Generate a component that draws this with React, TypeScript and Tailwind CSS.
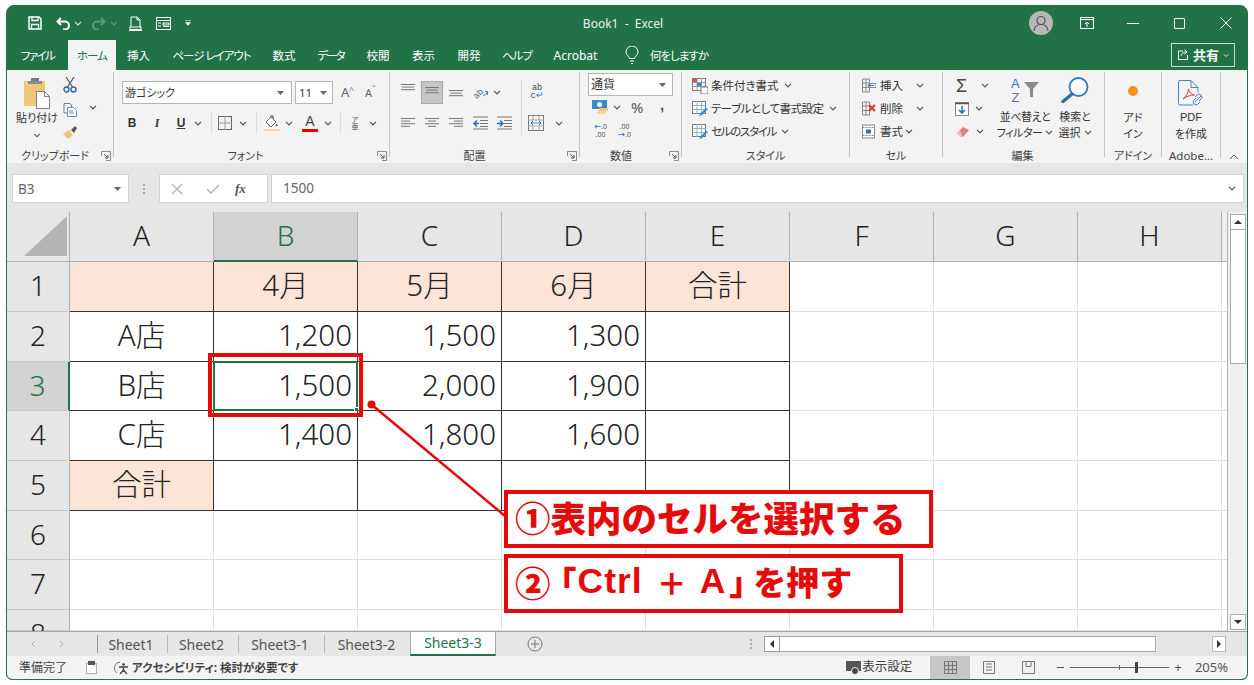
import React from "react";

const Chev = ({ className = "", color = "#555" }: { className?: string; color?: string }) => (
  <svg viewBox="0 0 8 5" className={"w-[8px] h-[5px] shrink-0 " + className}>
    <path d="M1 .8l3 3 3-3" fill="none" stroke={color} strokeWidth="1.2" />
  </svg>
);
const Drop = ({ className = "" }: { className?: string }) => (
  <svg viewBox="0 0 7 4" className={"w-[7px] h-[4px] shrink-0 " + className}>
    <path d="M0 0h7L3.5 4z" fill="#666" />
  </svg>
);
const Launcher = () => (
  <svg viewBox="0 0 10 10" className="w-[10px] h-[10px] shrink-0">
    <path d="M.5 5V.5H9.500V9.500H5" fill="none" stroke="#8a8a8a" />
    <path d="M3 3l4 4M7 4v3H4" fill="none" stroke="#555" />
  </svg>
);
const Sep = ({ className = "" }: { className?: string }) => <div className={"w-px shrink-0 bg-[#c4c4c4] " + className} />;
const MiniSep = ({ className = "" }: { className?: string }) => <div className={"w-px h-[22px] shrink-0 bg-[#dcdcdc] " + className} />;

const Lines = ({ rows, className = "" }: { rows: [number, number][]; className?: string }) => (
  <svg viewBox="0 0 14 12" className={"w-[14px] h-[12px] shrink-0 " + className}>
    {rows.map(([a, b], i) => (
      <path key={i} d={`M${a} ${i * 2.6 + 1.5}H${b}`} stroke="#777" strokeWidth="1" />
    ))}
  </svg>
);
const Indent = ({ flip, className = "" }: { flip?: boolean; className?: string }) => (
  <svg viewBox="0 0 15 14" className={"w-[15px] h-[14px] shrink-0 " + className}>
    <path d="M0 1H15M7 4.500H15M7 7.500H15M7 10.500H15M0 13H15" stroke="#777" />
    {flip ? <path d="M0 7.500H5M3 4.500l3 3-3 3" stroke="#1f6fb5" strokeWidth="1.400" fill="none" /> : <path d="M6 7.500H1M4 4.500l-3 3 3 3" stroke="#1f6fb5" strokeWidth="1.400" fill="none" />}
  </svg>
);

function Group({ w, label, launcher, children, labelClass = "" }: { w: string; label: string; launcher?: boolean; children: React.ReactNode; labelClass?: string }) {
  return (
    <div className={"flex flex-col h-full shrink-0 " + w}>
      <div className="flex-1 min-h-0">{children}</div>
      <div className="h-[15px] flex items-center text-[11px] text-[#444] leading-none">
        <span className={"flex-1 text-center whitespace-nowrap " + labelClass}>{label}</span>
        {launcher && <span className="mr-[2px]"><Launcher /></span>}
      </div>
    </div>
  );
}

const Tab = ({ w, children }: { w: string; children: React.ReactNode }) => (
  <div className={"h-full flex items-center justify-center pt-[1px] text-[11.500px] text-white whitespace-nowrap " + w}>{children}</div>
);

const peach = "bg-[#fce4d6]";
type C = { t?: string; right?: boolean; peach?: boolean };
const rows: C[][] = [
  [{ peach: true }, { t: "4月", peach: true }, { t: "5月", peach: true }, { t: "6月", peach: true }, { t: "合計", peach: true }],
  [{ t: "A店" }, { t: "1,200", right: true }, { t: "1,500", right: true }, { t: "1,300", right: true }, {}],
  [{ t: "B店" }, { t: "1,500", right: true }, { t: "2,000", right: true }, { t: "1,900", right: true }, {}],
  [{ t: "C店" }, { t: "1,400", right: true }, { t: "1,800", right: true }, { t: "1,600", right: true }, {}],
  [{ t: "合計", peach: true }, {}, {}, {}, {}],
];

function SheetGrid() {
  const cols = ["A", "B", "C", "D", "E", "F", "G", "H"];
  return (
    <div className="h-[419px] flex shrink-0">
      <div className="grid grid-cols-[63px_repeat(8,144px)_5px] grid-rows-[50px_50px_50px_49px_50px_50px_49px_50px_21px] overflow-hidden bg-white border-r border-[#b5b5b5] w-[1221px] text-[#222] font-light">
        <div className="bg-[#e6e6e6] border-r border-b border-[#b0b0b0] flex">
          <svg viewBox="0 0 62 48" className="w-[62px] h-[48px]">
            <path d="M17 44L60 4V44z" fill="#b4b4b4" />
          </svg>
        </div>
        {cols.map((c) => (
          <div key={c} className={"flex items-center justify-center text-[28px] leading-none border-r pb-[3px] " + (c === "B" ? "bg-[#d2d2d2] text-[#217346] border-b-2 border-b-[#217346] border-r-[#b0b0b0]" : "bg-[#e6e6e6] border-b border-[#b0b0b0]")}>{c}</div>
        ))}
        <div className="bg-[#efefef] border-b border-[#b0b0b0]" />
        {Array.from({ length: 8 }).map((_, r) => (
          <React.Fragment key={r}>
            <div className={"flex justify-center text-[28px] leading-none border-b border-b-[#c8c8c8] border-r pt-[9px] " + (r === 2 ? "bg-[#d2d2d2] text-[#217346] border-r-2 border-r-[#217346]" : "bg-[#e6e6e6] border-r-[#b0b0b0]")}>{r + 1}</div>
            {cols.map((_, c) => {
              const cell = r < 5 && c < 5 ? rows[r][c] : undefined;
              const inTable = r < 5 && c < 5;
              const sel = r === 2 && c === 1;
              return (
                <div key={c} className={"relative flex items-center text-[29.500px] leading-none border-r border-b px-[5px] pb-[3px] " + (inTable ? "border-[#333] " : "border-[#e0e0e0] ") + (cell?.peach ? peach + " " : "") + (cell?.right ? "justify-end" : "justify-center")}>
                  {cell?.t}
                  {sel && (
                    <div className="absolute -left-px -top-px right-[-1px] bottom-[-1px] border-2 border-[#217346]">
                      <div className="absolute right-[-3px] bottom-[-3px] w-[5px] h-[5px] bg-[#217346] border border-white" />
                    </div>
                  )}
                </div>
              );
            })}
            <div className="border-b border-[#e0e0e0] bg-white" />
          </React.Fragment>
        ))}
      </div>
      <div className="flex-1 bg-[#f0f0f0] flex flex-col pl-[2px] pt-[2px]">
        <div className="w-[16px] h-[16px] bg-white border border-[#ababab] flex items-center justify-center">
          <svg viewBox="0 0 8 4" className="w-[8px] h-[4px]"><path d="M4 0l4 4H0z" fill="#333" /></svg>
        </div>
        <div className="w-[16px] h-[134px] bg-white border border-t-0 border-[#ababab]" />
        <div className="flex-1" />
        <div className="w-[16px] h-[16px] mb-[1px] bg-white border border-[#ababab] flex items-center justify-center">
          <svg viewBox="0 0 8 4" className="w-[8px] h-[4px]"><path d="M0 0h8L4 4z" fill="#333" /></svg>
        </div>
      </div>
    </div>
  );
}

export default function App() {
  return (
    <div className="relative w-[1254px] h-[685px] bg-white pt-[5px] pl-[6px] overflow-hidden font-['Noto_Sans','Noto_Sans_CJK_JP',sans-serif] [font-feature-settings:'palt']">
      <div className="w-[1242px] h-[675px] rounded-t-[8px] rounded-b-[6px] border border-[#217346] flex flex-col overflow-hidden bg-[#217346]">
        {/* title */}
        <div className="h-[34px] flex items-center shrink-0 text-white">
          <div className="w-[520px] flex items-center">
            <svg viewBox="0 0 14 14" className="w-[14px] h-[14px] ml-[21px]">
              <path d="M1 1h10l2 2v10H1z" fill="none" stroke="#fff" strokeWidth="1.500" />
              <path d="M4 1.500v3h6v-3M3.500 13V8.500h7V13" fill="none" stroke="#fff" strokeWidth="1.300" />
            </svg>
            <svg viewBox="0 0 15 13" className="w-[15px] h-[13px] ml-[14px]">
              <path d="M5 1L1.500 4.500 5 8M2 4.500h7a4 4 0 0 1 0 8H7" fill="none" stroke="#fff" strokeWidth="2" />
            </svg>
            <Chev className="ml-[3px]" color="#d5e5da" />
            <svg viewBox="0 0 15 13" className="w-[15px] h-[13px] ml-[9px]">
              <path d="M10 1l3.500 3.500L10 8M13 4.500H6a4 4 0 0 0 0 8h2" fill="none" stroke="#5f9a78" strokeWidth="2" />
            </svg>
            <Chev className="ml-[4px]" color="#5f9a78" />
            <svg viewBox="0 0 13 15" className="w-[13px] h-[15px] ml-[11px]">
              <path d="M2 11V1h6l3 3v7M8 1v3h3" fill="none" stroke="#fff" />
              <path d="M0 14.500h13" stroke="#fff" />
              <rect x="1" y="11" width="11" height="2.500" fill="none" stroke="#fff" />
            </svg>
            <svg viewBox="0 0 15 13" className="w-[15px] h-[13px] ml-[14px]">
              <rect x=".5" y=".5" width="14" height="12" fill="none" stroke="#fff" />
              <path d="M0 3.500h15M2 6h3M2 9h3M7 6h6v2H7zM7 9.500h6" stroke="#fff" fill="none" />
            </svg>
            <svg viewBox="0 0 6 6" className="w-[6px] h-[6px] ml-[14px]">
              <path d="M0 .5h6M.5 2.500h5L3 5.500z" fill="#fff" stroke="#fff" strokeWidth=".5" />
            </svg>
          </div>
          <div className="w-[192px] text-center text-[12px] text-[#e9f1ec] whitespace-pre pt-[1px]">Book1  -  Excel</div>
          <div className="w-[24px] h-[24px] ml-[310px] rounded-full bg-[#b8b8b8] flex items-center justify-center">
            <svg viewBox="0 0 18 18" className="w-[18px] h-[18px]">
              <circle cx="9" cy="6.500" r="4" fill="none" stroke="#555" strokeWidth="1.200" />
              <path d="M2 17c.5-5 3.500-6.500 7-6.500s6.500 1.500 7 6.500" fill="none" stroke="#555" strokeWidth="1.200" />
            </svg>
          </div>
          <svg viewBox="0 0 14 12" className="w-[14px] h-[12px] ml-[27px]">
            <rect x=".5" y=".5" width="13" height="11" fill="none" stroke="#fff" />
            <path d="M0 2.500h14M7 10V5M5 7l2-2 2 2" fill="none" stroke="#fff" />
          </svg>
          <div className="w-[12px] h-px bg-white ml-[33px]" />
          <div className="w-[11px] h-[11px] rounded-[1px] border border-white ml-[35px]" />
          <svg viewBox="0 0 12 12" className="w-[12px] h-[12px] ml-[35px]">
            <path d="M.5.500l11 11M11.500.500l-11 11" stroke="#fff" />
          </svg>
        </div>
        {/* tabs */}
        <div className="h-[30px] flex items-stretch shrink-0 relative">
          <Tab w="w-[61px] tracking-[-1.500px]">ファイル</Tab>
          <div className="w-[48px] h-full bg-[#f3f3f3] text-[#217346] text-[11.500px] tracking-[-1px] pt-[1px] flex items-center justify-center">ホーム</div>
          <Tab w="w-[45px]">挿入</Tab>
          <Tab w="w-[101px] tracking-[-1px]">ページ レイアウト</Tab>
          <Tab w="w-[44px]">数式</Tab>
          <Tab w="w-[49px] tracking-[-2px]">データ</Tab>
          <Tab w="w-[46px]">校閲</Tab>
          <Tab w="w-[45px]">表示</Tab>
          <Tab w="w-[46px]">開発</Tab>
          <Tab w="w-[50px] tracking-[-1px]">ヘルプ</Tab>
          <Tab w="w-[67px] text-[12px]">Acrobat</Tab>
          <div className="flex items-center ml-[16px] text-[11.500px] text-white">
            <svg viewBox="0 0 14 18" className="w-[14px] h-[18px]">
              <path d="M4.500 12.500C4 10 1 9 1 6a6 6 0 0 1 12 0c0 3-3 4-3.500 6.500zM5 15h4M6 17.500h2" fill="none" stroke="#fff" />
            </svg>
            <span className="ml-[11px] pt-[1px] whitespace-nowrap tracking-[-1px]">何をしますか</span>
          </div>
          <div className="flex-1" />
          <div className="w-[64px] h-[24px] mr-[12px] mt-[3px] border border-[#c8ddd0] flex items-center text-white">
            <svg viewBox="0 0 12 12" className="w-[12px] h-[12px] ml-[5px]">
              <path d="M6 2H1.500v8.500h9V6M4 7c.5-2.500 2.500-4 5-4M7.500 .8 10 3 7.500 5.300" fill="none" stroke="#fff" />
            </svg>
            <span className="text-[13px] font-bold ml-[4px] leading-none whitespace-nowrap">共有</span>
            <Chev className="ml-[3px] scale-75" color="#fff" />
          </div>
        </div>
        {/* ribbon */}
        <div className="h-[93px] bg-[#f3f3f3] flex shrink-0 text-[#333] text-[11px] leading-none">
          <Group w="w-[106px]" label="クリップボード" launcher labelClass="pl-[2px]">
            <div className="flex pt-[8px]">
              <div className="w-[44px] ml-[8px] flex flex-col items-center">
                <svg viewBox="0 0 26 31" className="w-[26px] h-[31px]">
                  <rect x="0" y="3" width="21" height="25" fill="#efc67c" />
                  <rect x="7" y="0" width="8" height="3" fill="#7a7a7a" />
                  <rect x="4" y="3" width="14" height="3" fill="#8b8b8b" />
                  <path d="M12.500 13.500h8l5 5v12h-13z" fill="#fff" stroke="#7f7f7f" />
                  <path d="M20.500 13.500v5h5" fill="none" stroke="#7f7f7f" />
                </svg>
                <span className="mt-[3px] text-[11px] whitespace-nowrap">貼り付け</span>
                <Chev className="mt-[10px] scale-90" />
              </div>
              <div className="w-[22px] flex flex-col items-center">
                <svg viewBox="0 0 14 16" className="w-[14px] h-[16px] mt-[-1px]">
                  <path d="M3 0l6.500 10M11 0L4.500 10" stroke="#555" strokeWidth="1.200" />
                  <circle cx="3.500" cy="12.500" r="2.500" fill="none" stroke="#2a6fb0" strokeWidth="1.400" />
                  <circle cx="10.500" cy="12.500" r="2.500" fill="none" stroke="#2a6fb0" strokeWidth="1.400" />
                </svg>
                <svg viewBox="0 0 14 14" className="w-[14px] h-[14px] mt-[10px]">
                  <path d="M1 .5h6l1.500 1.500v3M1 .5v9.500h3" fill="#fff" stroke="#777" />
                  <path d="M4.500 4.500h6l3 3v6h-9z" fill="#fff" stroke="#6b8fb5" />
                  <path d="M6 8h4M6 10h5" stroke="#6b8fb5" />
                </svg>
                <svg viewBox="0 0 14 14" className="w-[14px] h-[14px] mt-[8px]">
                  <path d="M0 9l6-4 4 5-5 4z" fill="#eac27a" />
                  <path d="M8 5l4-4 2 2-3 5z" fill="#555" />
                </svg>
              </div>
              <Chev className="ml-[8px] mt-[27px]" />
            </div>
          </Group>
          <Sep className="h-[85px] mt-[2px]" />
          <Group w="w-[275px]" label="フォント" launcher>
            <div className="pt-[11px]">
              <div className="flex items-center h-[23px] pl-[8px]">
                <div className="w-[170px] h-[23px] bg-white border border-[#b5b5b5] flex items-center pl-[2px] pr-[7px] text-[11px] justify-between">
                  <span>游ゴシック</span>
                  <Drop />
                </div>
                <div className="w-[38px] h-[23px] ml-[3px] bg-white border border-[#b5b5b5] flex items-center pl-[3px] pr-[5px] text-[11.500px] justify-between">
                  <span>11</span>
                  <Drop />
                </div>
                <span className="ml-[8px] w-[16px] text-[13px] text-[#666]">A<sup className="text-[#2b79c2] text-[8px]">^</sup></span>
                <span className="ml-[8px] w-[16px] text-[11px] text-[#666]">A<sup className="text-[#2b79c2] text-[8px]">ˇ</sup></span>
              </div>
              <div className="flex items-center h-[22px] mt-[8px] pl-[13px]">
                <span className="w-[10px] text-[12px] font-bold font-['Liberation_Sans'] text-center">B</span>
                <span className="w-[8px] ml-[16px] text-[12px] font-bold italic font-['Liberation_Serif'] text-center">I</span>
                <span className="w-[10px] ml-[15px] text-[12px] font-bold underline font-['Liberation_Sans'] text-center">U</span>
                <Chev className="ml-[8px]" />
                <MiniSep className="ml-[9px]" />
                <svg viewBox="0 0 14 14" className="w-[14px] h-[14px] ml-[6px]">
                  <rect x=".5" y=".5" width="13" height="13" fill="none" stroke="#666" />
                  <path d="M7 0v14M0 7h14" stroke="#999" />
                </svg>
                <Chev className="ml-[7px]" />
                <MiniSep className="ml-[9px]" />
                <svg viewBox="0 0 16 16" className="w-[16px] h-[16px] ml-[7px]">
                  <path d="M2 7l5-5 5 5-5 5z" fill="#fff" stroke="#666" />
                  <path d="M6 1h3v3" fill="none" stroke="#444" />
                  <path d="M12.500 8.500l1.500 2.500h-3z" fill="#2b79c2" />
                  <rect x="0" y="14" width="16" height="2" fill="#f7d3b5" />
                </svg>
                <Chev className="ml-[5px]" />
                <div className="w-[16px] ml-[9px] flex flex-col items-center">
                  <span className="text-[14px] font-['Liberation_Sans'] leading-[13px] text-[#444]">A</span>
                  <div className="w-[16px] h-[3px] bg-[#e00] mt-[1px]" />
                </div>
                <Chev className="ml-[6px]" />
                <MiniSep className="ml-[8px]" />
                <div className="w-[10px] ml-[9px] flex flex-col items-center text-[7px] leading-[7px] text-[#555]">
                  <span>ア</span>
                  <span>亜</span>
                </div>
                <Chev className="ml-[9px]" />
              </div>
            </div>
          </Group>
          <Sep className="h-[85px] mt-[2px]" />
          <Group w="w-[189px]" label="配置" launcher labelClass="pr-[8px]">
            <div className="flex pt-[10px]">
              <div className="w-[131px]">
                <div className="flex items-center h-[24px] pl-[11px]">
                  <Lines rows={[[0, 14], [1, 13], [0, 14]]} className="-mt-[7px]" />
                  <div className="w-[22px] h-[23px] ml-[6px] bg-[#c6c6c6] border border-[#aaa] flex items-center justify-center">
                    <Lines rows={[[0, 14], [1, 13], [0, 14]]} />
                  </div>
                  <Lines rows={[[0, 14], [1, 13], [0, 14]]} className="ml-[6px] mt-[6px]" />
                  <svg viewBox="0 0 16 14" className="w-[16px] h-[14px] ml-[10px] overflow-visible">
                    <text x="1" y="12" fontSize="9" fill="#666" transform="rotate(-45 5 10)" fontFamily="Liberation Sans">ab</text>
                    <path d="M10 11l5-4M12 6l3 1-1 3" stroke="#2b79c2" fill="none" />
                  </svg>
                  <Chev className="ml-[4px]" />
                </div>
                <div className="flex items-center h-[22px] mt-[8px] pl-[11px]">
                  <Lines rows={[[0, 14], [0, 9], [0, 14], [0, 9]]} />
                  <Lines rows={[[0, 14], [3, 11], [0, 14], [3, 11]]} className="ml-[10px]" />
                  <Lines rows={[[0, 14], [5, 14], [0, 14], [5, 14]]} className="ml-[10px]" />
                  <Indent className="ml-[10px]" />
                  <Indent flip className="ml-[9px]" />
                </div>
              </div>
              <Sep className="h-[55px] bg-[#dcdcdc]" />
              <div className="flex-1">
                <div className="flex h-[24px] items-center pl-[7px]">
                  <div className="w-[16px] flex flex-col items-center text-[8.500px] leading-[8px] font-['Liberation_Mono'] text-[#444]">
                    <span>ab</span>
                    <span>c<span className="text-[#2b79c2]">↵</span></span>
                  </div>
                </div>
                <div className="flex h-[22px] items-center mt-[8px] pl-[6px]">
                  <svg viewBox="0 0 16 16" className="w-[16px] h-[16px]">
                    <rect x=".5" y=".5" width="15" height="15" fill="#fff" stroke="#777" />
                    <path d="M0 5h16M0 11h16M5 0v5M11 0v5M5 11v5M11 11v5" stroke="#999" />
                    <path d="M3 8h10M5 6L3 8l2 2M11 6l2 2-2 2" stroke="#2b79c2" fill="none" />
                  </svg>
                  <Chev className="ml-[11px]" />
                </div>
              </div>
            </div>
          </Group>
          <Sep className="h-[85px] mt-[2px]" />
          <Group w="w-[101px]" label="数値" launcher labelClass="pr-[7px]">
            <div className="pt-[3px]">
              <div className="w-[85px] h-[23px] ml-[8px] bg-white border border-[#b5b5b5] flex items-center justify-between pl-[2px] pr-[6px] text-[12px]">
                <span>通貨</span>
                <Drop />
              </div>
              <div className="flex items-center h-[23px] pl-[12px]">
                <svg viewBox="0 0 17 16" className="w-[17px] h-[16px]">
                  <rect x="0" y="0" width="15" height="9" fill="#3f87c6" />
                  <circle cx="7.500" cy="4.500" r="2.500" fill="#fff" />
                  <rect x="7" y="8" width="9" height="3" fill="#efc67c" />
                  <rect x="5" y="11" width="9" height="3" fill="#f5d79e" />
                </svg>
                <Chev className="ml-[4px]" />
                <span className="ml-[10px] text-[15px] w-[14px] text-[#555] -mt-[1px]">%</span>
                <span className="ml-[15px] text-[15px] font-bold text-[#555] -mt-[6px] font-['Liberation_Sans']">,</span>
              </div>
              <div className="flex items-center h-[23px] pl-[13px] text-[7px] leading-[8px] text-[#555]">
                <div className="flex flex-col items-center w-[15px]">
                  <span><span className="text-[#2b79c2] font-bold">←</span>.0</span>
                  <span>.00</span>
                </div>
                <div className="flex flex-col items-center w-[15px] ml-[9px]">
                  <span>.00</span>
                  <span><span className="text-[#2b79c2] font-bold">→</span>.0</span>
                </div>
              </div>
            </div>
          </Group>
          <Sep className="h-[85px] mt-[2px]" />
          <Group w="w-[167px]" label="スタイル">
            <div className="pt-[4px] pl-[10px]">
              <div className="flex items-center h-[23px] whitespace-nowrap text-[11.500px]">
                <svg viewBox="0 0 16 16" className="w-[16px] h-[16px] mr-[3px]">
                  <rect x=".5" y=".5" width="13" height="12" fill="#fff" stroke="#777" />
                  <path d="M.5 4.500h13M.5 8.500h13M5 0v13M9.500 0v13" stroke="#999" />
                  <rect x="1" y="1" width="4" height="3" fill="#d9534f" />
                  <rect x="5" y="5" width="4" height="3" fill="#3f87c6" />
                  <rect x="9" y="9" width="7" height="7" fill="#fff" stroke="#777" />
                </svg>
                <span>条件付き書式</span>
                <Chev className="ml-[5px]" />
              </div>
              <div className="flex items-center h-[23px] whitespace-nowrap text-[11.500px]">
                <svg viewBox="0 0 16 16" className="w-[16px] h-[16px] mr-[3px]">
                  <rect x=".5" y=".5" width="13" height="12" fill="#fff" stroke="#777" />
                  <path d="M.5 4.500h13M.5 8.500h13M5 0v13M9.500 0v13" stroke="#8fb2d6" />
                  <path d="M8 13l6-6 2 1-6 6-3 1z" fill="#3f87c6" />
                </svg>
                <span className="tracking-[-0.5px]">テーブルとして書式設定</span>
                <Chev className="ml-[5px]" />
              </div>
              <div className="flex items-center h-[23px] whitespace-nowrap text-[11.500px]">
                <svg viewBox="0 0 16 16" className="w-[16px] h-[16px] mr-[3px]">
                  <rect x=".5" y=".5" width="13" height="12" fill="#fff" stroke="#777" />
                  <path d="M.5 4.500h13M.5 8.500h13M5 0v13M9.500 0v13" stroke="#8fb2d6" />
                  <path d="M8 13l6-6 2 1-6 6-3 1z" fill="#3f87c6" />
                </svg>
                <span className="tracking-[-1.300px]">セルのスタイル</span>
                <Chev className="ml-[5px]" />
              </div>
            </div>
          </Group>
          <Sep className="h-[85px] mt-[2px]" />
          <Group w="w-[92px]" label="セル">
            <div className="pt-[4px] pl-[11px] text-[11.500px]">
              <div className="flex items-center h-[23px]">
                <svg viewBox="0 0 15 15" className="w-[15px] h-[15px]">
                  <path d="M1.500 1h7v13h-7zM1.500 5h7M1.500 9.500h7M5 1v13" fill="none" stroke="#888" />
                  <path d="M9 5.500h6v4H9z" fill="#fff" stroke="#888" />
                  <path d="M13 7.500H7M9 5.500l-2 2 2 2" fill="none" stroke="#2b79c2" />
                </svg>
                <span className="ml-[4px]">挿入</span>
                <Chev className="ml-[13px]" />
              </div>
              <div className="flex items-center h-[23px]">
                <svg viewBox="0 0 15 15" className="w-[15px] h-[15px]">
                  <path d="M1.500 1h7v13h-7zM1.500 5h7M1.500 9.500h7M5 1v13" fill="none" stroke="#888" />
                  <path d="M8 4l6 6M14 4l-6 6" stroke="#d9372b" strokeWidth="2" />
                </svg>
                <span className="ml-[4px]">削除</span>
                <Chev className="ml-[13px]" />
              </div>
              <div className="flex items-center h-[23px]">
                <svg viewBox="0 0 15 15" className="w-[15px] h-[15px]">
                  <rect x="1.500" y="1" width="12" height="13" fill="#fff" stroke="#888" />
                  <path d="M1.500 3.500h12M1.500 11.500h12" stroke="#888" strokeDasharray="2 1" />
                  <rect x="5" y="5.500" width="5" height="4" fill="#3f6fa5" />
                </svg>
                <span className="ml-[4px]">書式</span>
                <Chev className="ml-[2px]" />
              </div>
            </div>
          </Group>
          <Sep className="h-[85px] mt-[2px]" />
          <Group w="w-[161px]" label="編集" labelClass="pr-[2px]">
            <div className="flex pt-[4px]">
              <div className="w-[50px] pl-[13px]">
                <div className="flex items-center h-[23px]">
                  <span className="w-[12px] text-[18px] text-[#444] font-['Liberation_Sans'] leading-none">Σ</span>
                  <Chev className="ml-[13px]" />
                </div>
                <div className="flex items-center h-[23px]">
                  <svg viewBox="0 0 14 14" className="w-[14px] h-[14px] -ml-[1px]">
                    <rect x=".5" y=".5" width="13" height="13" fill="#fff" stroke="#888" />
                    <path d="M0 1.500h14" stroke="#555" strokeWidth="1.500" />
                    <path d="M7 4v7M4 8l3 3 3-3" fill="none" stroke="#2b79c2" strokeWidth="1.600" />
                  </svg>
                  <Chev className="ml-[6px]" />
                </div>
                <div className="flex items-center h-[23px]">
                  <svg viewBox="0 0 14 12" className="w-[14px] h-[12px]">
                    <path d="M1 7l6-6 6 3-6 7z" fill="#e8798f" />
                    <path d="M1 7l3.500 4H7L4 4.500z" fill="#f3b6c2" />
                  </svg>
                  <Chev className="ml-[6px]" />
                </div>
              </div>
              <div className="w-[60px] ml-[2px] flex flex-col items-center">
                <svg viewBox="0 0 28 26" className="w-[28px] h-[26px] mt-[3px] overflow-visible">
                  <text x="0" y="11" fontSize="13" fill="#2b79c2" fontFamily="Liberation Sans">A</text>
                  <text x="0.500" y="25" fontSize="13" fill="#8a5ab5" fontFamily="Liberation Sans">Z</text>
                  <path d="M13 5h15l-6 7v8h-3v-8z" fill="#8a8a8a" />
                </svg>
                <span className="mt-[8px] whitespace-nowrap text-[11px] tracking-[-0.5px]">並べ替えと</span>
                <span className="mt-[5px] whitespace-nowrap text-[11px] tracking-[-0.5px] flex items-center">フィルター<Chev className="ml-[3px]" /></span>
              </div>
              <div className="w-[40px] flex flex-col items-center">
                <svg viewBox="0 0 28 26" className="w-[28px] h-[26px] mt-[3px]">
                  <circle cx="17.500" cy="10" r="9" fill="#fff" stroke="#2b79c2" strokeWidth="1.800" />
                  <path d="M11 17L2 24.500" stroke="#2b6ea8" strokeWidth="3.500" strokeLinecap="round" />
                </svg>
                <span className="mt-[8px] whitespace-nowrap text-[11px]">検索と</span>
                <span className="mt-[5px] whitespace-nowrap text-[11px] flex items-center">選択<Chev className="ml-[3px]" /></span>
              </div>
            </div>
          </Group>
          <Sep className="h-[85px] mt-[2px]" />
          <Group w="w-[56px]" label="アドイン">
            <div className="flex flex-col items-center pt-[16px]">
              <div className="w-[10px] h-[10px] rounded-full bg-[#f9930e]" />
              <span className="mt-[16px] text-[11px]">アド</span>
              <span className="mt-[5px] text-[11px]">イン</span>
            </div>
          </Group>
          <Sep className="h-[85px] mt-[2px]" />
          <Group w="w-[58px]" label="Adobe…" labelClass="text-[11.500px]">
            <div className="flex flex-col items-center pt-[10px]">
              <svg viewBox="0 0 26 27" className="w-[26px] h-[27px]">
                <path d="M15 25H2a1.500 1.500 0 0 1-1.500-1.500v-22A1.500 1.500 0 0 1 2 .5h11l7 7v5" fill="none" stroke="#3f87c6" />
                <path d="M13 .5v7h7" fill="none" stroke="#3f87c6" />
                <path d="M5 19c3-2 5-6 5.500-10 .5 3 3 5.500 6 6-4 0-8 1.500-11.500 4z" fill="none" stroke="#d0453c" />
                <path d="M17 22l6-6M18 18l-2 2a2.500 2.500 0 0 0 4 4l2-2M21 21l2-2a2.500 2.500 0 0 0-4-4l-2 2" fill="none" stroke="#3f87c6" />
              </svg>
              <span className="mt-[5px] text-[11px] font-['Liberation_Sans','Noto_Sans_CJK_JP']">PDF</span>
              <span className="mt-[5px] text-[11px]">を作成</span>
            </div>
          </Group>
          <Sep className="h-[85px] mt-[2px]" />
          <div className="flex-1 flex items-end justify-center pb-[3px]">
            <svg viewBox="0 0 10 6" className="w-[10px] h-[6px]"><path d="M1 5l4-4 4 4" fill="none" stroke="#555" /></svg>
          </div>
        </div>
        {/* formula bar */}
        <div className="h-[49px] bg-[#e6e6e6] shrink-0 flex pt-[11px] pb-[9px] pl-[5px] text-[#666]">
          <div className="w-[117px] bg-white border border-[#d4d4d4] flex items-center justify-between pl-[5px] pr-[7px] text-[13.500px]">
            <span className="mt-[2px]">B3</span>
            <Drop />
          </div>
          <div className="w-[30px] flex flex-col items-center justify-center gap-[2px]">
            <div className="w-[2px] h-[2px] bg-[#a8a8a8]" />
            <div className="w-[2px] h-[2px] bg-[#a8a8a8]" />
            <div className="w-[2px] h-[2px] bg-[#a8a8a8]" />
          </div>
          <div className="w-[109px] bg-white border border-[#d4d4d4] flex items-center">
            <svg viewBox="0 0 12 12" className="w-[12px] h-[12px] ml-[11px]"><path d="M1 1l10 10M11 1L1 11" stroke="#b5b5b5" strokeWidth="1.300" /></svg>
            <svg viewBox="0 0 14 12" className="w-[14px] h-[12px] ml-[23px]"><path d="M1 6l4 4 8-8" fill="none" stroke="#b5b5b5" strokeWidth="1.500" /></svg>
            <span className="ml-[15px] text-[13px] italic font-bold font-['Liberation_Serif'] text-[#555]">fx</span>
          </div>
          <div className="w-[973px] ml-[3px] bg-white border border-[#d4d4d4] flex items-center justify-between pl-[11px] pr-[7px] text-[13.500px]">
            <span>1500</span>
            <Chev />
          </div>
        </div>
        <SheetGrid />
        {/* sheet tabs */}
        <div className="h-[25px] bg-[#e6e6e6] border-t border-[#a6a6a6] flex items-center text-[14px] text-[#555] shrink-0 font-['Noto_Sans']">
          <svg viewBox="0 0 5 8" className="w-[5px] h-[8px] ml-[24px]"><path d="M4 1L1 4l3 3" fill="none" stroke="#b5b5b5" /></svg>
          <svg viewBox="0 0 5 8" className="w-[5px] h-[8px] ml-[23px]"><path d="M1 1l3 3-3 3" fill="none" stroke="#b5b5b5" /></svg>
          <div className="w-px h-[18px] bg-[#999] ml-[33px]" />
          <div className="w-[69px] text-center pr-[3px]">Sheet1</div>
          <div className="w-px h-[18px] bg-[#bbb]" />
          <div className="w-[70px] text-center pr-[3px]">Sheet2</div>
          <div className="w-px h-[18px] bg-[#bbb]" />
          <div className="w-[85px] text-center pr-[3px]">Sheet3-1</div>
          <div className="w-px h-[18px] bg-[#bbb]" />
          <div className="w-[85px] text-center pr-[2px]">Sheet3-2</div>
          <div className="w-[86px] h-[24px] bg-white border-x border-b-2 border-[#a6a6a6] border-b-[#217346] text-[#217346] flex items-center justify-center -mt-px">Sheet3-3</div>
          <svg viewBox="0 0 16 16" className="w-[16px] h-[16px] ml-[31px]">
            <circle cx="8" cy="8" r="7" fill="none" stroke="#777" />
            <path d="M8 4v8M4 8h8" stroke="#777" />
          </svg>
          <div className="flex flex-col gap-[2px] ml-[207px]">
            <div className="w-[2px] h-[2px] bg-[#aaa]" />
            <div className="w-[2px] h-[2px] bg-[#aaa]" />
            <div className="w-[2px] h-[2px] bg-[#aaa]" />
          </div>
          <div className="w-[16px] h-[16px] bg-white border border-[#999] ml-[12px] flex items-center justify-center">
            <svg viewBox="0 0 4 8" className="w-[4px] h-[8px]"><path d="M4 0v8L0 4z" fill="#333" /></svg>
          </div>
          <div className="w-[376px] h-[16px] bg-white border border-[#ababab] border-l-0" />
          <div className="w-[14px] h-[16px] bg-white border border-[#bbb] ml-[56px] flex items-center justify-center">
            <svg viewBox="0 0 4 8" className="w-[4px] h-[8px]"><path d="M0 0v8l4-4z" fill="#333" /></svg>
          </div>
        </div>
        {/* status */}
        <div className="flex-1 bg-[#f3f3f3] flex items-center text-[11px] text-[#444] leading-none rounded-b-[5px] overflow-hidden">
          <span className="ml-[12px] w-[50px] whitespace-nowrap text-[12px]">準備完了</span>
          <svg viewBox="0 0 12 13" className="w-[12px] h-[13px] ml-[17px]">
            <rect x=".5" y="2.500" width="10" height="10" fill="#fff" stroke="#666" strokeDasharray="1 1" />
            <rect x="2" y="0" width="7" height="4" fill="#555" />
          </svg>
          <svg viewBox="0 0 16 14" className="w-[16px] h-[14px] ml-[16px]">
            <path d="M6 1A6 6 0 0 0 3 12" fill="none" stroke="#777" />
            <circle cx="9.500" cy="3.500" r="1.300" fill="#444" />
            <path d="M5 6h9M9.500 6v3M6 13l3.500-4 3.500 4" fill="none" stroke="#444" strokeWidth="1.300" />
          </svg>
          <span className="ml-[2px] font-bold whitespace-nowrap w-[163px] text-[11.500px]">アクセシビリティ: 検討が必要です</span>
          <div className="flex-1" />
          <svg viewBox="0 0 16 14" className="w-[16px] h-[14px]">
            <rect x="0" y="0" width="15" height="10" fill="#555" />
            <circle cx="9" cy="10" r="3.500" fill="#444" stroke="#f3f3f3" />
          </svg>
          <span className="text-[12.500px] whitespace-nowrap w-[52px]">表示設定</span>
          <div className="w-[40px] h-full bg-[#c6c6c6] ml-[16px] flex items-center justify-center">
            <svg viewBox="0 0 13 13" className="w-[13px] h-[13px]">
              <path d="M.5.500h12v12H.5zM4.500 0v13M8.500 0v13M0 4.500h13M0 8.500h13" fill="none" stroke="#777" />
            </svg>
          </div>
          <svg viewBox="0 0 12 13" className="w-[12px] h-[13px] ml-[13px]">
            <path d="M.5.500h11v12H.5zM3 3h6M3 6h6M3 9h6" fill="none" stroke="#777" />
          </svg>
          <svg viewBox="0 0 13 13" className="w-[13px] h-[13px] ml-[27px]">
            <path d="M.5.500h12v12H.5zM4 .500v5h5v-5" fill="none" stroke="#777" />
          </svg>
          <div className="w-[7px] h-px bg-[#555] ml-[22px]" />
          <div className="relative w-[99px] h-px bg-[#666] ml-[6px]">
            <div className="absolute left-[49px] -top-[2px] w-px h-[5px] bg-[#666]" />
            <div className="absolute left-[65px] -top-[5px] w-[3px] h-[11px] bg-[#444]" />
          </div>
          <span className="ml-[5px] text-[13px] text-[#555] font-['Liberation_Sans']">+</span>
          <span className="ml-[13px] mr-[19px] text-[13px] text-[#555] font-['Noto_Sans']">205%</span>
        </div>
      </div>
      {/* annotations */}
      <div className="absolute left-[208px] top-[353px] w-[155px] h-[64px] border-4 border-[#e60b0b]" />
      <svg className="absolute left-0 top-0 w-[1254px] h-[685px] pointer-events-none" viewBox="0 0 1254 685">
        <circle cx="371.500" cy="404.500" r="4" fill="#e60b0b" />
        <path d="M372 405L505 516" stroke="#e60b0b" strokeWidth="2.500" />
      </svg>
      <div className="absolute left-[504px] top-[490px] w-[429px] h-[58px] border-4 border-[#e60b0b] bg-white text-[#e60b0b] font-black text-[35.500px] leading-none flex items-center pl-[7px] pb-[4px] whitespace-nowrap [font-feature-settings:normal] font-['Noto_Sans_CJK_JP',sans-serif]">①表内のセルを選択する</div>
      <div className="absolute left-[504px] top-[554px] w-[399px] h-[59px] border-4 border-[#e60b0b] bg-white text-[#e60b0b] font-black text-[33px] leading-none flex items-center pl-[7px] pb-[4px] whitespace-nowrap [font-feature-settings:normal] font-['Noto_Sans_CJK_JP',sans-serif]">
        <span className="text-[35.500px]">②</span>
        <span className="-ml-[7px] w-[33px]">「</span>
        <span className="ml-[1px] tracking-[1px] text-[35.500px] font-['Liberation_Sans'] font-bold">Ctrl</span>
        <span className="ml-[14px] text-[30px]">＋</span>
        <span className="ml-[13px] text-[35.500px] font-['Liberation_Sans'] font-bold">A</span>
        <span className="ml-[4px] -mr-[9px] w-[33px]">」</span>
        <span>を押す</span>
      </div>
    </div>
  );
}
